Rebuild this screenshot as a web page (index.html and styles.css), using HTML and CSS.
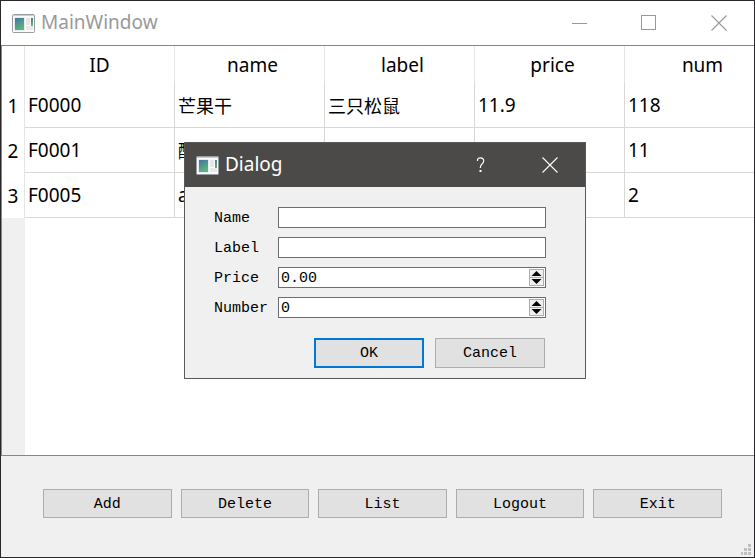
FILE: index.html
```html
<!DOCTYPE html>
<html lang="en">
<head>
<meta charset="utf-8">
<title>MainWindow</title>
<link rel="stylesheet" href="styles.css">
</head>
<body>
<svg width="0" height="0" class="defs" aria-hidden="true">
  <defs>
    <linearGradient id="pane" x1="0" y1="0" x2="0.4" y2="1"><stop offset="0" stop-color="#4076a0"/><stop offset="1" stop-color="#5fb37c"/></linearGradient>
    <symbol id="app" viewBox="0 0 23 19">
      <rect x="0.5" y="0.5" width="22" height="18" rx="1" fill="#fafafa" stroke="#989da2"/>
      <path d="M1 1.5h21" stroke="#c9cdd2"/>
      <rect x="2.5" y="3.5" width="10" height="13" fill="#d5dbe0"/>
      <rect x="3" y="4" width="9" height="12" fill="url(#pane)"/>
      <rect x="14" y="4" width="4" height="7" fill="#e6e6e6"/>
      <rect x="14" y="12" width="7" height="4" fill="#e9e9e9"/>
      <rect x="19" y="4" width="2" height="8" fill="url(#pane)"/>
    </symbol>
    <symbol id="cross" viewBox="0 0 16 16"><path d="M0.5 0.5l15 15M15.5 0.5l-15 15" fill="none" stroke="currentColor" stroke-width="1.1"/></symbol>
    <symbol id="up" viewBox="0 0 11 7"><path d="M0.5 6h10L5.5 1z" fill="#000"/></symbol>
    <symbol id="down" viewBox="0 0 11 7"><path d="M0.5 1h10L5.5 6z" fill="#000"/></symbol>
  </defs>
</svg>
<main class="window">
  <header class="titlebar">
    <svg class="app-icon"><use href="#app"/></svg>
    <h1 class="title">MainWindow</h1>
    <button class="caption" aria-label="Minimize"><svg width="16" height="16"><path d="M1 8.5h15" stroke="currentColor"/></svg></button>
    <button class="caption" aria-label="Maximize"><svg width="16" height="16"><rect x="0.5" y="0.5" width="14" height="14" fill="none" stroke="currentColor"/></svg></button>
    <button class="caption" aria-label="Close"><svg width="16" height="16"><use href="#cross"/></svg></button>
  </header>
  <section class="view">
    <table class="grid">
      <thead>
        <tr><th class="corner"></th><th>ID</th><th>name</th><th>label</th><th>price</th><th>num</th></tr>
      </thead>
      <tbody>
        <tr><th>1</th><td>F0000</td><td class="cjk">芒果干</td><td class="cjk">三只松鼠</td><td>11.9</td><td>118</td></tr>
        <tr><th>2</th><td>F0001</td><td class="cjk">酸</td><td></td><td></td><td>11</td></tr>
        <tr><th>3</th><td>F0005</td><td>a</td><td></td><td></td><td>2</td></tr>
      </tbody>
    </table>
  </section>
  <footer class="actions">
    <button class="push">Add</button>
    <button class="push">Delete</button>
    <button class="push">List</button>
    <button class="push">Logout</button>
    <button class="push">Exit</button>
  </footer>
  <svg class="grip" width="10" height="11" aria-hidden="true"><path d="M7 0h3v3h-3zM3 4h3v3h-3zM7 4h3v3h-3zM0 8h2v3h-2zM3 8h3v3h-3zM7 8h3v3h-3z" fill="#bfbfbf"/></svg>
</main>
<form class="dialog" role="dialog" aria-labelledby="dialog-title">
  <div class="dialog-bar">
    <svg class="app-icon"><use href="#app"/></svg>
    <h2 class="title" id="dialog-title">Dialog</h2>
    <button type="button" class="caption" aria-label="Help"><svg width="10" height="16"><path d="M2.5 4V2.5Q3 .8 5.5.8Q8.7.8 8.7 4Q8.7 5.6 7 7Q5.3 8.4 5.3 11" fill="none" stroke="currentColor" stroke-width="1.2"/><rect x="4.5" y="13" width="2" height="2" fill="currentColor"/></svg></button>
    <button type="button" class="caption" aria-label="Close"><svg width="16" height="16"><use href="#cross"/></svg></button>
  </div>
  <div class="dialog-body">
    <div class="fields">
      <label for="name">Name</label>
      <div class="field"><input id="name" type="text"></div>
      <label for="label">Label</label>
      <div class="field"><input id="label" type="text"></div>
      <label for="price">Price</label>
      <div class="field"><input id="price" type="number" step="0.01" value="0.00"><span class="spin"><button type="button" aria-label="Increase price"><svg><use href="#up"/></svg></button><button type="button" aria-label="Decrease price"><svg><use href="#down"/></svg></button></span></div>
      <label for="number">Number</label>
      <div class="field"><input id="number" type="number" value="0"><span class="spin"><button type="button" aria-label="Increase number"><svg><use href="#up"/></svg></button><button type="button" aria-label="Decrease number"><svg><use href="#down"/></svg></button></span></div>
    </div>
    <div class="dialog-actions">
      <button type="button" class="push default">OK</button>
      <button type="button" class="push">Cancel</button>
    </div>
  </div>
</form>
</body>
</html>
```
FILE: styles.css
```css
* { box-sizing: border-box; }

body {
  margin: 0;
  background: #f0f0f0;
  color: #000;
  font: 19px/24px "Noto Sans", "Noto Sans CJK SC", sans-serif;
}

.defs { position: absolute; }
svg { display: block; flex: none; }

button {
  margin: 0;
  padding: 0;
  border: 0;
  background: none;
  color: inherit;
  font: inherit;
}

.window {
  position: relative;
  display: flex;
  flex-direction: column;
  height: 100vh;
  border: 1px solid #29272a;
  overflow: hidden;
}

.titlebar {
  display: flex;
  align-items: center;
  height: 44px;
  padding-left: 11px;
  background: #fff;
  color: #999;
}

.app-icon { width: 23px; height: 19px; }

.title {
  flex: 1;
  margin: 0 0 0 6px;
  font-size: 19px;
  line-height: 22px;
  font-weight: 400;
}

.titlebar .title, .dialog-bar .title { padding-bottom: 2px; }

.caption {
  display: flex;
  align-items: center;
  justify-content: center;
  width: 70px;
  height: 44px;
}

.view {
  flex: 1;
  min-height: 0;
  overflow: hidden;
  border: 1px solid #828790;
  border-right: 0;
  background: linear-gradient(to right, #f0f0f0 23px, #fff 23px);
}

.grid {
  width: 773px;
  table-layout: fixed;
  border-collapse: separate;
  border-spacing: 0;
  background: #fff;
}

.grid th, .grid td {
  padding: 0 3px;
  border-right: 1px solid #d8d8d8;
  font-weight: 400;
  text-align: left;
  white-space: nowrap;
}

.grid td { height: 45px; border-bottom: 1px solid #d8d8d8; }
.grid thead th { height: 37px; padding: 0 0 0 6px; border-color: #e5e5e5; text-align: center; }
.grid thead .corner { width: 23px; padding: 0; }
.grid thead .corner + th { padding: 0; }
.grid tbody th { padding: 0; border-color: #e5e5e5; text-align: center; }
.grid .cjk { font-family: "Noto Sans CJK SC", sans-serif; font-size: 18px; }

.actions {
  display: flex;
  gap: 9px;
  padding: 33px 32px 39px 42px;
}

.push {
  flex: 1;
  height: 29px;
  padding-top: 2px;
  border: 1px solid #adadad;
  background: #e1e1e1;
  font: 15px/20px "Liberation Mono", monospace;
}

.push.default { border: 2px solid #0078d7; }

.grip { position: absolute; right: 3px; bottom: 2px; }

.dialog {
  position: absolute;
  top: 142px;
  left: 184px;
  width: 402px;
  border: 1px solid #5b5a58;
  background: #f0f0f0;
}

.dialog-bar {
  display: flex;
  align-items: center;
  height: 44px;
  padding-left: 11px;
  background: #4c4a48;
  color: #fff;
}

.dialog-body {
  padding: 20px 39px 10px 29px;
  font: 15px/19px "Liberation Mono", monospace;
}

.fields {
  display: grid;
  grid-template-columns: 54px 1fr;
  gap: 9px 10px;
}

.fields label { padding-top: 2px; }

.field {
  display: flex;
  align-items: center;
  height: 21px;
  border: 1px solid #6d6d6d;
  background: #fff;
}

.field input {
  flex: 1;
  min-width: 0;
  height: 19px;
  padding: 2px 2px 0;
  border: 0;
  outline: 0;
  background: none;
  font: inherit;
  appearance: textfield;
}

.field input::-webkit-inner-spin-button { appearance: none; margin: 0; }

.spin {
  display: flex;
  flex-direction: column;
  margin-right: 1px;
  width: 15px;
  height: 17px;
  border: 1px solid #adadad;
  background: #f0f0f0;
}

.spin button {
  display: flex;
  align-items: center;
  justify-content: center;
  flex: 1;
}

.spin button + button { border-top: 1px solid #adadad; }
.spin svg { width: 11px; height: 7px; }

.dialog-actions {
  display: flex;
  justify-content: flex-end;
  gap: 11px;
  padding: 20px 1px 0 0;
}

.dialog-actions .push { flex: none; width: 110px; height: 30px; }
```
